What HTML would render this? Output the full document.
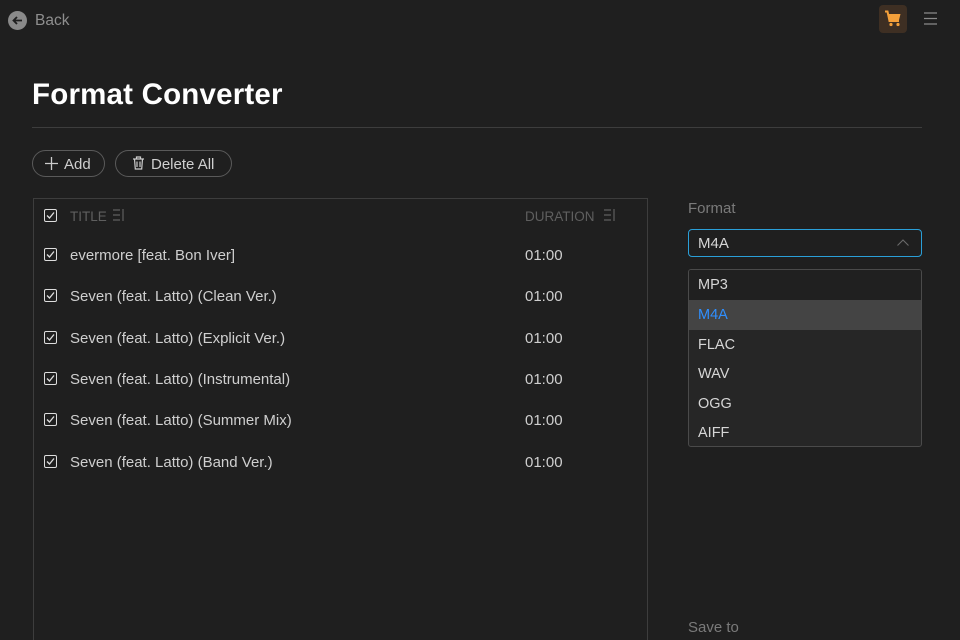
<!DOCTYPE html>
<html><head><meta charset="utf-8"><style>
*{margin:0;padding:0;box-sizing:border-box}
html,body{width:960px;height:640px;overflow:hidden}
body{background:#1f1f1f;font-family:"Liberation Sans",sans-serif;color:#cfcfcf;position:relative}
.a{position:absolute}
.cb{position:absolute;width:13px;height:13px;border:1.5px solid #ddd;border-radius:2px}
.cb svg{position:absolute;left:1px;top:1px}
.row{position:absolute;left:33px;width:614px;height:20px;font-size:15px;color:#cfcfcf}
.row .t{position:absolute;left:37px;top:0}
.row .d{position:absolute;left:492px;top:0}
.opt{position:absolute;left:0;width:232px;height:30px;line-height:30px;padding-left:9px;font-size:14.5px;color:#d6d6d6}
</style></head><body>
<svg class="a" style="left:8px;top:11px" width="19" height="19" viewBox="0 0 19 19"><circle cx="9.5" cy="9.5" r="9.5" fill="#8a8a8a"/><path d="M14 9.5H5.5M9 6L5.5 9.5L9 13" stroke="#1f1f1f" stroke-width="1.8" fill="none"/></svg>
<div class="a" style="left:35px;top:12px;font-size:15.5px;color:#8e8e8e">Back</div>
<div class="a" style="left:879px;top:5px;width:28px;height:28px;background:#3e2f23;border-radius:4px"></div>
<svg class="a" style="left:884px;top:10px" width="18" height="17" viewBox="0 0 18 17"><path d="M1 1.5h2.5l2 9.5h9.5" stroke="#f5a03a" stroke-width="2" fill="none"/><path d="M4.5 4h12l-1.5 6H6z" fill="#f5a03a"/><circle cx="7" cy="14.5" r="1.6" fill="#f5a03a"/><circle cx="14" cy="14.5" r="1.6" fill="#f5a03a"/></svg>
<svg class="a" style="left:924px;top:12px" width="14" height="13"><path d="M0 1h13M0 6.5h13M0 12h13" stroke="#8a8a8a" stroke-width="1.2"/></svg>
<div class="a" style="left:32px;top:78px;font-size:29.5px;font-weight:bold;color:#fff;letter-spacing:0.2px">Format Converter</div>
<div class="a" style="left:32px;top:127px;width:890px;height:1px;background:#3d3d3d"></div>
<div class="a" style="left:32px;top:150px;width:73px;height:27px;border:1px solid #5a5a5a;border-radius:14px"></div>
<svg class="a" style="left:45px;top:157px" width="13" height="13"><path d="M6.5 0v13M0 6.5h13" stroke="#ccc" stroke-width="1.3"/></svg>
<div class="a" style="left:64px;top:156px;font-size:15px;color:#cfcfcf">Add</div>
<div class="a" style="left:115px;top:150px;width:117px;height:27px;border:1px solid #5a5a5a;border-radius:14px"></div>
<svg class="a" style="left:132px;top:156px" width="13" height="14" viewBox="0 0 13 14"><path d="M1 3h11M4.5 3V1h4v2M2.5 3l.8 10h6.4l.8-10M5 5.5v5.5M8 5.5v5.5" stroke="#ccc" stroke-width="1.2" fill="none"/></svg>
<div class="a" style="left:151px;top:156px;font-size:15px;color:#cfcfcf">Delete All</div>
<div class="a" style="left:33px;top:198px;width:615px;height:460px;border:1px solid #3d3d3d"></div>
<div class="cb" style="left:44px;top:209px"><svg width="9" height="9"><path d="M1 4.5l2.5 2.5L8 1.5" stroke="#ddd" stroke-width="1.3" fill="none"/></svg></div>
<div class="a" style="left:70px;top:209px;font-size:13.5px;color:#5f5f5f">TITLE</div>
<svg class="a" style="left:113px;top:209px" width="11" height="12"><path d="M0 1h7M0 6h7M0 11h7M10 0v12" stroke="#5f5f5f" stroke-width="1.2"/></svg>
<div class="a" style="left:525px;top:209px;font-size:13.5px;color:#5f5f5f">DURATION</div>
<svg class="a" style="left:604px;top:209px" width="11" height="12"><path d="M0 1h7M0 6h7M0 11h7M10 0v12" stroke="#5f5f5f" stroke-width="1.2"/></svg>
<div class="row" style="top:247px"><div class="cb" style="left:11px;top:1px"><svg width="9" height="9"><path d="M1 4.5l2.5 2.5L8 1.5" stroke="#ddd" stroke-width="1.3" fill="none"/></svg></div><span class="t">evermore [feat. Bon Iver]</span><span class="d">01:00</span></div>
<div class="row" style="top:288px"><div class="cb" style="left:11px;top:1px"><svg width="9" height="9"><path d="M1 4.5l2.5 2.5L8 1.5" stroke="#ddd" stroke-width="1.3" fill="none"/></svg></div><span class="t">Seven (feat. Latto) (Clean Ver.)</span><span class="d">01:00</span></div>
<div class="row" style="top:330px"><div class="cb" style="left:11px;top:1px"><svg width="9" height="9"><path d="M1 4.5l2.5 2.5L8 1.5" stroke="#ddd" stroke-width="1.3" fill="none"/></svg></div><span class="t">Seven (feat. Latto) (Explicit Ver.)</span><span class="d">01:00</span></div>
<div class="row" style="top:371px"><div class="cb" style="left:11px;top:1px"><svg width="9" height="9"><path d="M1 4.5l2.5 2.5L8 1.5" stroke="#ddd" stroke-width="1.3" fill="none"/></svg></div><span class="t">Seven (feat. Latto) (Instrumental)</span><span class="d">01:00</span></div>
<div class="row" style="top:412px"><div class="cb" style="left:11px;top:1px"><svg width="9" height="9"><path d="M1 4.5l2.5 2.5L8 1.5" stroke="#ddd" stroke-width="1.3" fill="none"/></svg></div><span class="t">Seven (feat. Latto) (Summer Mix)</span><span class="d">01:00</span></div>
<div class="row" style="top:454px"><div class="cb" style="left:11px;top:1px"><svg width="9" height="9"><path d="M1 4.5l2.5 2.5L8 1.5" stroke="#ddd" stroke-width="1.3" fill="none"/></svg></div><span class="t">Seven (feat. Latto) (Band Ver.)</span><span class="d">01:00</span></div>
<div class="a" style="left:688px;top:200px;font-size:15px;color:#7a7a7a">Format</div>
<div class="a" style="left:688px;top:229px;width:234px;height:28px;border:1.5px solid #2a9fd8;border-radius:4px"></div>
<div class="a" style="left:698px;top:235px;font-size:15px;color:#d6d6d6">M4A</div>
<svg class="a" style="left:897px;top:239px" width="12" height="7"><path d="M0.5 6.5L6 1l5.5 5.5" stroke="#6a6a6a" stroke-width="1.1" fill="none"/></svg>
<div class="a" style="left:688px;top:269px;width:234px;height:178px;border:1px solid #4a4a4a;border-radius:3px;background:#262626;overflow:hidden">
<div class="opt" style="top:0;background:#202020">MP3</div>
<div class="opt" style="top:30px;background:#444;color:#2f8fff">M4A</div>
<div class="opt" style="top:60px">FLAC</div>
<div class="opt" style="top:89px">WAV</div>
<div class="opt" style="top:119px">OGG</div>
<div class="opt" style="top:148px">AIFF</div>
</div>
<div class="a" style="left:688px;top:619px;font-size:15px;color:#7a7a7a">Save to</div>
</body></html>
